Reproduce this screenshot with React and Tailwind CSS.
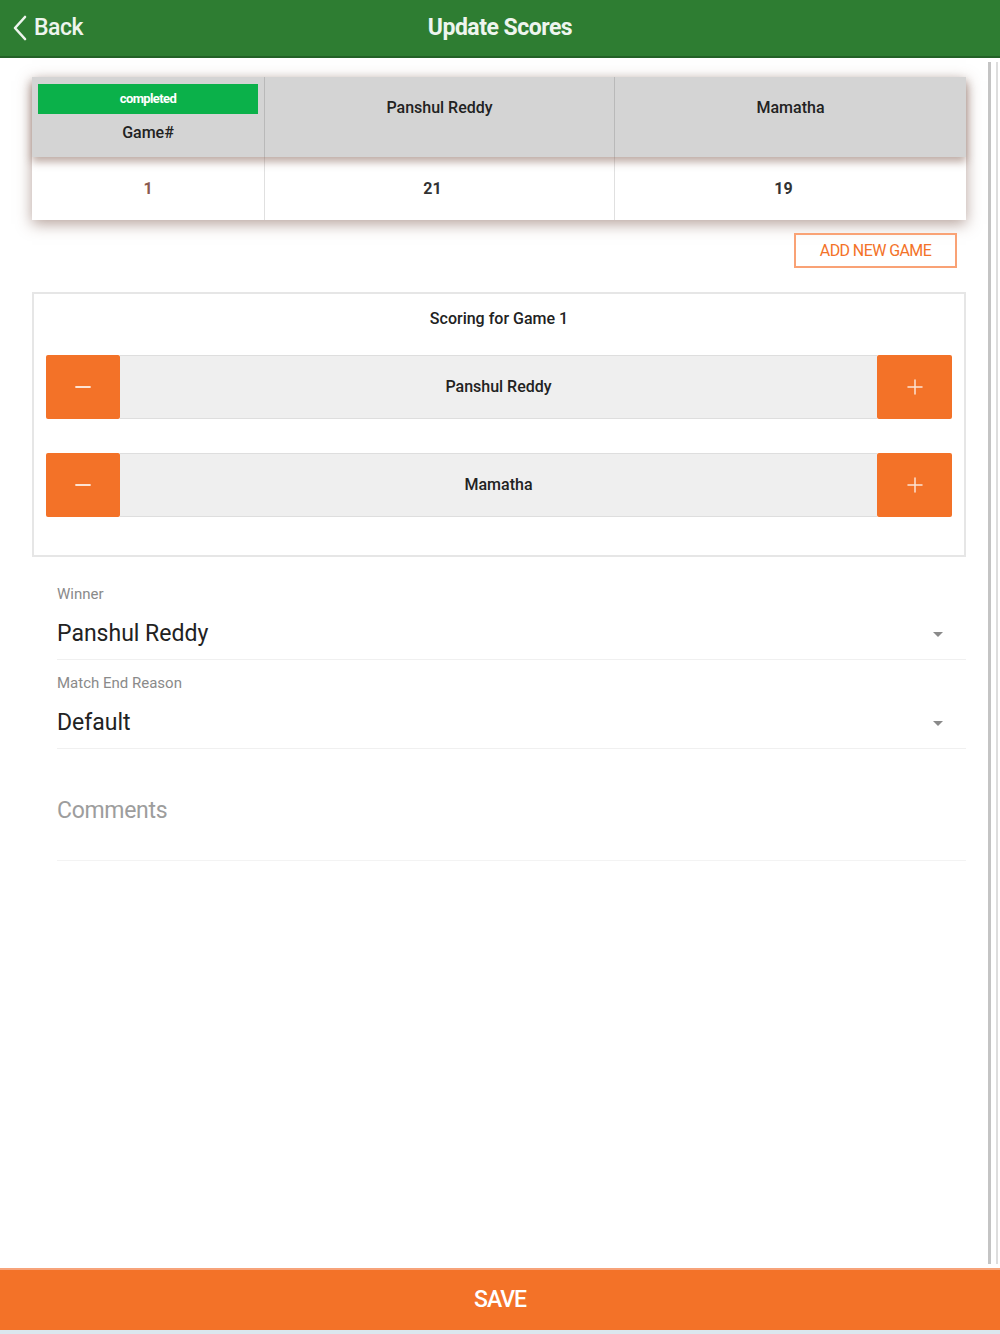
import { Minus, Plus } from 'lucide-react';

const players = ['Panshul Reddy', 'Mamatha'];

function ScoreRow({ name }) {
  return (
    <div className="flex h-[64px] w-full">
      <button className="w-[74px] h-full bg-[#f37228] flex items-center justify-center rounded-[2px]">
        <Minus className="w-[24px] h-[24px] text-[#fde3d3]" strokeWidth={1.8} />
      </button>
      <div className="flex-1 h-full bg-[#efefef] border-y border-[#dedede] flex items-center justify-center text-[16px] font-medium text-[#222]">
        {name}
      </div>
      <button className="w-[75px] h-full bg-[#f37228] flex items-center justify-center rounded-[2px]">
        <Plus className="w-[24px] h-[24px] text-[#fde3d3]" strokeWidth={1.5} />
      </button>
    </div>
  );
}

function SelectField({ label, value }) {
  return (
    <div className="border-b border-[#f0f0f0]">
      <p className="text-[15px] text-[#8a8a8a] leading-[16px] pt-[15px]">{label}</p>
      <div className="flex items-center justify-between h-[50px] mt-[7px]">
        <span className="text-[23px] text-[#222]">{value}</span>
        <span className="mr-[23px] w-0 h-0 border-l-[5px] border-r-[5px] border-t-[5px] border-l-transparent border-r-transparent border-t-[#8a8a8a]"></span>
      </div>
    </div>
  );
}

export default function App() {
  return (
    <div className="w-[1000px] h-[1334px] flex flex-col bg-white overflow-hidden" style={{ fontFamily: 'Roboto, "Liberation Sans", sans-serif' }}>
      <header className="h-[58px] bg-[#2e7d32] border-b-2 border-[#236127] flex items-center relative shrink-0">
        <div className="flex items-center pl-[10px] text-white">
          <svg width="20" height="28" viewBox="0 0 20 28" fill="none" stroke="#eef5ee" strokeWidth="2.6" strokeLinecap="round" strokeLinejoin="round">
            <path d="M15 3 L5 14 L15 25" />
          </svg>
          <span className="ml-[4px] text-[23px] font-medium tracking-[-0.5px] text-[#eef5ee]">Back</span>
        </div>
        <h1 className="absolute left-0 right-0 text-center text-[23px] font-bold text-[#eef5ee] tracking-[-0.5px] pointer-events-none">Update Scores</h1>
      </header>

      <div className="flex-1 flex min-h-0">
        <main className="flex-1 pl-[32px] pr-[22px] pt-[19px]">
          <div className="shadow-[0_4px_14px_rgba(110,70,55,0.5)]">
            <div className="grid grid-cols-[233px_350px_1fr] h-[80px] bg-[#d4d4d4] shadow-[0_5px_8px_rgba(110,70,55,0.45)] relative">
              <div className="flex flex-col items-center border-r border-[#b9b9b9] pt-[7px] px-[6px]">
                <div className="w-full h-[30px] bg-[#0bb14a] flex items-center justify-center text-white text-[13px] font-bold tracking-[-0.6px]">completed</div>
                <span className="mt-[7px] text-[16px] font-medium text-[#222]">Game#</span>
              </div>
              <div className="flex items-center justify-center border-r border-[#b9b9b9] text-[16px] font-medium text-[#222] pb-[18px]">Panshul Reddy</div>
              <div className="flex items-center justify-center text-[16px] font-medium text-[#222] pb-[18px]">Mamatha</div>
            </div>
            <div className="grid grid-cols-[233px_350px_1fr] h-[63px] bg-white">
              <div className="flex items-center justify-center border-r border-[#e0e0e0] text-[16px] font-bold text-[#8b5a4e]">1</div>
              <div className="flex items-center justify-center border-r border-[#e0e0e0] text-[16px] font-bold text-[#333] pr-[14px]">21</div>
              <div className="flex items-center justify-center text-[16px] font-bold text-[#333] pr-[14px]">19</div>
            </div>
          </div>

          <div className="flex justify-end mt-[13px] pr-[9px]">
            <button className="h-[35px] w-[163px] border-2 border-[#f9a275] text-[#f37228] text-[16px] tracking-[-0.6px] flex items-center justify-center">ADD NEW  GAME</button>
          </div>

          <section className="mt-[24px] border-2 border-[#e6e6e6] px-[12px] pb-[38px]">
            <p className="text-center text-[16px] font-medium text-[#222] pt-[13px] pb-[24px]">Scoring for Game 1</p>
            <div className="flex flex-col gap-[34px]">
              {players.map((p) => (
                <ScoreRow key={p} name={p} />
              ))}
            </div>
          </section>

          <div className="pl-[25px] pt-[14px]">
            <SelectField label="Winner" value="Panshul Reddy" />
            <SelectField label="Match End Reason" value="Default" />
            <div className="border-b border-[#f3f3f3] h-[112px] pt-[48px]">
              <span className="block text-[23px] leading-[28px] text-[#9d9d9d] tracking-[-0.3px]">Comments</span>
            </div>
          </div>
        </main>
        <div className="w-[12px] shrink-0 flex pt-[4px] pb-[4px]">
          <div className="w-[3px] bg-[#c4c4c4]"></div>
          <div className="w-[2px] bg-[#dddddd] ml-[5px]"></div>
        </div>
      </div>

      <button className="h-[62px] shrink-0 bg-[#f37228] border-t-2 border-[#f7a37a] text-white text-[23px] font-medium tracking-[-1px] flex items-center justify-center">SAVE</button>
      <div className="h-[4px] bg-[#dbe7ee] shrink-0"></div>
    </div>
  );
}
